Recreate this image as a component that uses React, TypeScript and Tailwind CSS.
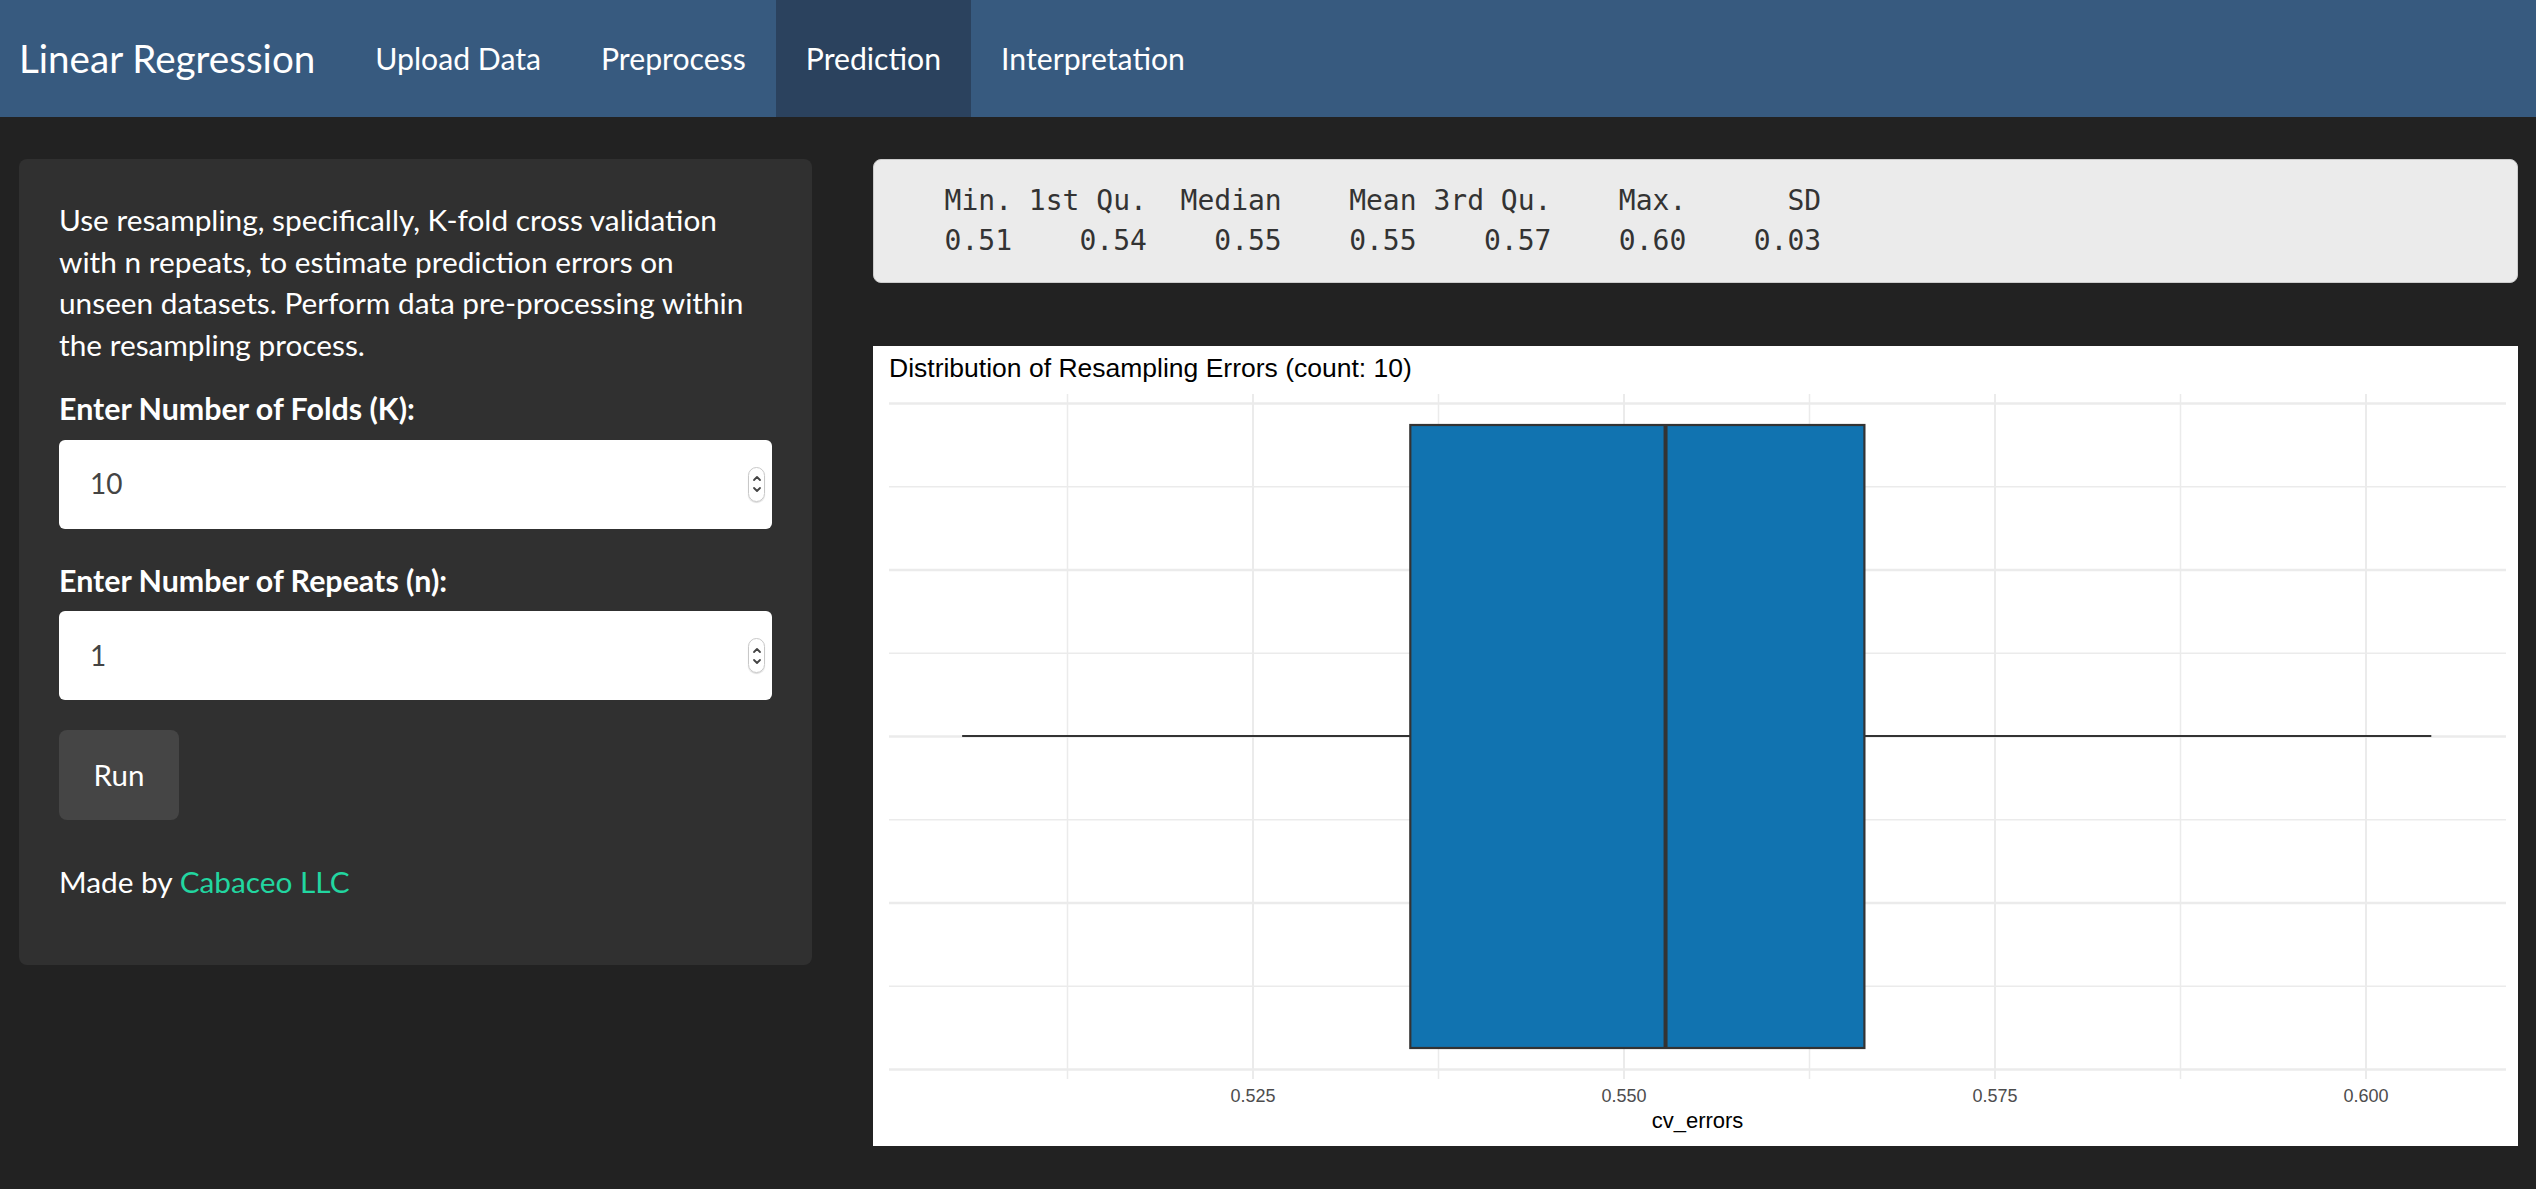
import React from "react";

const tabs = ["Upload Data", "Preprocess", "Prediction", "Interpretation"];

// x position of a value on the chart's horizontal axis (px inside the svg)
const xPos = (v: number) => 380 + (v - 0.525) * 14840;

const hLines = [57.5, 140.75, 224, 307.25, 390.5, 473.75, 557, 640.25, 723.5];
const vLines = [194.5, 380, 565.5, 751, 936.5, 1122, 1307.5, 1493];
const ticks = [0.525, 0.55, 0.575, 0.6];

function NumberBox({ value }: { value: string }) {
  return (
    <div className="mt-[10px] flex h-[89px] items-center justify-between rounded-[6px] bg-white pl-[31px] pr-[7px]">
      <span className="text-[28px] text-[#444444]">{value}</span>
      <span className="flex h-[35px] w-[17px] flex-col items-center justify-center rounded-full border border-[#c8c8c8] shadow-[0_1px_1px_rgba(0,0,0,0.15)]">
        <svg width="10" height="24" viewBox="0 0 10 24" fill="none" stroke="#444" strokeWidth="1.8" strokeLinecap="round" strokeLinejoin="round">
          <path d="M2 8 L5 5 L8 8" />
          <path d="M2 16 L5 19 L8 16" />
        </svg>
      </span>
    </div>
  );
}

function ErrorsChart() {
  const boxL = xPos(0.5356);
  const boxR = xPos(0.5662);
  const med = xPos(0.5528);
  return (
    <svg width="1645" height="800" viewBox="0 0 1645 800" className="block">
      <rect width="1645" height="800" fill="#ffffff" />
      <text x="16" y="31" fontFamily="'Liberation Sans', Arial, sans-serif" fontSize="26.5" fill="#000">
        Distribution of Resampling Errors (count: 10)
      </text>
      {vLines.map((x, i) => (
        <line key={"v" + i} x1={x} x2={x} y1={48} y2={733} stroke="#ebebeb" strokeWidth={i % 2 ? 2 : 1.5} />
      ))}
      {hLines.map((y, i) => (
        <line key={"h" + i} x1={16} x2={1633} y1={y} y2={y} stroke="#ebebeb" strokeWidth={i % 2 ? 1.5 : 2.5} />
      ))}
      {/* whiskers */}
      <line x1={xPos(0.5054)} x2={boxL} y1={390} y2={390} stroke="#333" strokeWidth={2} />
      <line x1={boxR} x2={xPos(0.6044)} y1={390} y2={390} stroke="#333" strokeWidth={2} />
      {/* box */}
      <rect x={boxL} y={79} width={boxR - boxL} height={623} fill="#1173b0" stroke="#333" strokeWidth={2.2} />
      <line x1={med} x2={med} y1={79} y2={702} stroke="#333" strokeWidth={4} />
      {ticks.map((t) => (
        <text
          key={t}
          x={xPos(t)}
          y={756}
          textAnchor="middle"
          fontFamily="'Liberation Sans', Arial, sans-serif"
          fontSize="18"
          fill="#4d4d4d"
        >
          {t.toFixed(3)}
        </text>
      ))}
      <text x={824.5} y={782} textAnchor="middle" fontFamily="'Liberation Sans', Arial, sans-serif" fontSize="22" fill="#000">
        cv_errors
      </text>
    </svg>
  );
}

export default function App() {
  return (
    <div className="min-h-screen bg-[#222222] font-['Lato',sans-serif] text-white">
      <nav className="flex h-[117px] items-stretch bg-[#375a7f]">
        <div className="flex items-center pl-[19px] pr-[30px] text-[38.6px]">Linear Regression</div>
        {tabs.map((t) => (
          <div
            key={t}
            className={
              t === "Prediction"
                ? "flex items-center bg-[#2b425e] px-[30px] text-[30.2px]"
                : "flex items-center px-[30px] text-[30.2px]"
            }
          >
            {t}
          </div>
        ))}
      </nav>

      <div className="flex items-start gap-[61px] pl-[19px] pr-[18px] pt-[42px]">
        <aside className="w-[793px] shrink-0 rounded-[8px] bg-[#303030] px-[40px] pb-[62px] pt-[40px] text-[29.8px] leading-[41.7px]">
          <p>
            Use resampling, specifically, K-fold cross validation
            <br />
            with n repeats, to estimate prediction errors on
            <br />
            unseen datasets. Perform data pre-processing within
            <br />
            the resampling process.
          </p>
          <div className="mt-[22px] text-[30.4px] font-bold">Enter Number of Folds (K):</div>
          <NumberBox value="10" />
          <div className="mt-[31px] text-[30.4px] font-bold">Enter Number of Repeats (n):</div>
          <NumberBox value="1" />
          <button className="mt-[30px] flex h-[90px] w-[120px] items-center justify-center rounded-[8px] bg-[#454545] text-[29.5px] text-white">
            Run
          </button>
          <p className="mt-[41px]">
            Made by <span className="text-[#22d6a0]">Cabaceo LLC</span>
          </p>
        </aside>

        <main className="min-w-0 flex-1">
          <pre className="rounded-[8px] border border-[#cccccc] bg-[#ebebeb] px-[20px] py-[21px] font-['DejaVu_Sans_Mono',monospace] text-[28px] leading-[40px] text-[#333333]">
            {"   Min. 1st Qu.  Median    Mean 3rd Qu.    Max.      SD\n   0.51    0.54    0.55    0.55    0.57    0.60    0.03"}
          </pre>
          <div className="mt-[63px]">
            <ErrorsChart />
          </div>
        </main>
      </div>
    </div>
  );
}
